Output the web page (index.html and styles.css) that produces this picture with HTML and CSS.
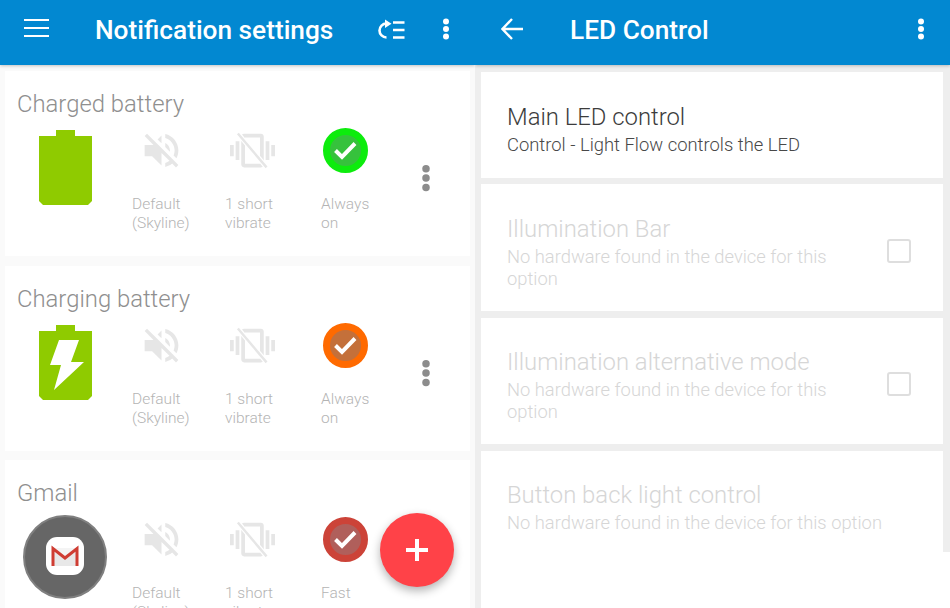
FILE: index.html
```html
<!DOCTYPE html>
<html lang="en">
<head>
<meta charset="utf-8">
<title>Light Flow settings</title>
<link rel="stylesheet" href="styles.css">
</head>
<body>
<svg class="defs" width="0" height="0" aria-hidden="true">
  <symbol id="more" viewBox="0 0 8 24">
    <circle cx="4" cy="4.5" r="3"/><circle cx="4" cy="12" r="3"/><circle cx="4" cy="19.5" r="3"/>
  </symbol>
  <symbol id="mute" viewBox="0 0 24 24">
    <path d="M16.5 12c0-1.77-1.02-3.29-2.5-4.03v2.21l2.45 2.45c.03-.2.05-.41.05-.63zm2.5 0c0 .94-.2 1.82-.54 2.64l1.51 1.51C20.63 14.91 21 13.5 21 12c0-4.28-2.99-7.86-7-8.77v2.06c2.89.86 5 3.54 5 6.71zM4.27 3L3 4.27 7.73 9H3v6h4l5 5v-6.73l4.25 4.25c-.67.52-1.42.93-2.25 1.18v2.06c1.38-.31 2.63-.95 3.69-1.81L19.73 21 21 19.73l-9-9L4.27 3zM12 4L9.91 6.09 12 8.18V4z"/>
  </symbol>
  <symbol id="novib" viewBox="0 0 24 24">
    <path d="M0 15h2V9H0v6zm3 2h2V7H3v10zm19-8v6h2V9h-2zm-3 8h2V7h-2v10zM16.5 3h-9C6.67 3 6 3.67 6 4.5v15c0 .83.67 1.5 1.5 1.5h9c.83 0 1.5-.67 1.5-1.5v-15c0-.83-.67-1.5-1.5-1.5zM16 19H8V5h8v14z"/>
    <path d="M4.5 3.2 19.5 21" stroke="#fff" stroke-width="2.6" fill="none"/>
    <path d="M4.2 2.9 19.5 21" stroke="#e6e6e6" stroke-width="1.3" fill="none"/>
  </symbol>
  <symbol id="tick" viewBox="0 0 46 46">
    <path d="M13.5 23.5 20 30 33 16.5" fill="none" stroke="#fff" stroke-width="4"/>
  </symbol>
  <symbol id="battery" viewBox="0 0 53 75">
    <path d="M17 0h19v6h17v65l-4 4H4l-4-4V6h17z"/>
  </symbol>
</svg>

<main class="screens">
  <section class="screen screen-list">
    <header class="appbar">
      <span class="appbar-lead">
        <svg class="ic-menu" viewBox="0 0 25 18"><path d="M0 1h25M0 9h25M0 17h25"/></svg>
      </span>
      <h1 class="appbar-title">Notification settings</h1>
      <svg class="ic-redo" viewBox="0 0 28 21">
        <path class="ln" d="M9.500 4.500A7 7 0 0 0 9.500 18.500"/>
        <path class="fl" d="M8 0.500l6.500 4.200L8 9z"/>
        <path class="ln" d="M16 3.500H27.500M16 11H27.500M16 18.500H27.500"/>
      </svg>
      <svg class="ic-more"><use href="#more"/></svg>
    </header>

    <div class="list">
      <article class="rule">
        <h2 class="rule-title">Charged battery</h2>
        <div class="rule-row">
          <div class="rule-lead"><svg class="ic-battery"><use href="#battery"/></svg></div>
          <div class="opt opt-sound"><svg class="ic-off"><use href="#mute"/></svg><p>Default (Skyline)</p></div>
          <div class="opt opt-vib"><svg class="ic-off"><use href="#novib"/></svg><p>1 short vibrate</p></div>
          <div class="opt opt-led"><span class="led led-green"><svg><use href="#tick"/></svg></span><p>Always on</p></div>
          <svg class="ic-rule-more"><use href="#more"/></svg>
        </div>
      </article>

      <article class="rule">
        <h2 class="rule-title">Charging battery</h2>
        <div class="rule-row">
          <div class="rule-lead">
            <svg class="ic-battery" viewBox="0 0 53 75">
              <use href="#battery"/>
              <path class="bolt" d="M20 15h20l-8 22h13L15 65l7-25H11z"/>
            </svg>
          </div>
          <div class="opt opt-sound"><svg class="ic-off"><use href="#mute"/></svg><p>Default (Skyline)</p></div>
          <div class="opt opt-vib"><svg class="ic-off"><use href="#novib"/></svg><p>1 short vibrate</p></div>
          <div class="opt opt-led"><span class="led led-orange"><svg><use href="#tick"/></svg></span><p>Always on</p></div>
          <svg class="ic-rule-more"><use href="#more"/></svg>
        </div>
      </article>

      <article class="rule">
        <h2 class="rule-title">Gmail</h2>
        <div class="rule-row">
          <div class="rule-lead">
            <svg class="ic-app" viewBox="0 0 84 84">
              <circle cx="42" cy="42" r="41" fill="#666" stroke="#808080" stroke-width="2"/>
              <rect x="23" y="22" width="38" height="38" rx="11" fill="#fff"/>
              <path d="M29 33h26v18H29z" fill="#e8e8e8"/>
              <path d="M29 33l13 10 13-10" fill="#f4f4f4"/>
              <path d="M30 51V33.500l12 9.500 12-9.500V51" fill="none" stroke="#cf3d33" stroke-width="3"/>
            </svg>
          </div>
          <div class="opt opt-sound"><svg class="ic-off"><use href="#mute"/></svg><p>Default (Skyline)</p></div>
          <div class="opt opt-vib"><svg class="ic-off"><use href="#novib"/></svg><p>1 short vibrate</p></div>
          <div class="opt opt-led"><span class="led led-red"><svg><use href="#tick"/></svg></span><p>Fast</p></div>
          <svg class="ic-rule-more"><use href="#more"/></svg>
        </div>
      </article>
    </div>

    <button class="fab" type="button" aria-label="Add">
      <svg viewBox="0 0 22 22"><path d="M11 0v22M0 11h22"/></svg>
    </button>
  </section>

  <section class="screen screen-led">
    <header class="appbar">
      <span class="appbar-lead">
        <svg class="ic-back" viewBox="0 0 22 22"><path d="M22 11H2M11 1 1.500 11 11 21"/></svg>
      </span>
      <h1 class="appbar-title">LED Control</h1>
      <svg class="ic-more"><use href="#more"/></svg>
    </header>

    <div class="prefs">
      <div class="pref pref-main">
        <div class="pref-text">
          <h2>Main LED control</h2>
          <p>Control - Light Flow controls the LED</p>
        </div>
      </div>
      <div class="pref pref-off pref-a">
        <div class="pref-text">
          <h2>Illumination Bar</h2>
          <p>No hardware found in the device for this option</p>
        </div>
        <span class="check"></span>
      </div>
      <div class="pref pref-off pref-b">
        <div class="pref-text">
          <h2>Illumination alternative mode</h2>
          <p>No hardware found in the device for this option</p>
        </div>
        <span class="check"></span>
      </div>
      <div class="pref pref-off pref-last">
        <div class="pref-text">
          <h2>Button back light control</h2>
          <p>No hardware found in the device for this option</p>
        </div>
      </div>
      <div class="prefs-end"></div>
    </div>
  </section>
</main>
</body>
</html>
```
FILE: styles.css
```css
* { box-sizing: border-box; }

html, body {
  margin: 0;
  height: 608px;
  overflow: hidden;
  background: #fafafa;
  font-family: Roboto, "Liberation Sans", sans-serif;
}

h1, h2, p { margin: 0; font-weight: 400; }

.defs { position: absolute; }

.screens {
  display: grid;
  grid-template-columns: 475px 475px;
  height: 608px;
}

.screen {
  position: relative;
  height: 608px;
  overflow: hidden;
  display: flex;
  flex-direction: column;
}

.screen-list { background: #fafafa; }
.screen-led { background: #eeeeee; }

/* App bar */
.appbar {
  flex: none;
  position: relative;
  z-index: 2;
  height: 65px;
  display: flex;
  align-items: center;
  background: #0288d1;
  box-shadow: 0 1px 3px rgba(0, 0, 0, .22);
  color: #fff;
}

.appbar-lead {
  flex: none;
  width: 95px;
  padding-left: 24px;
  display: flex;
}

.appbar-title {
  flex: 1;
  font-size: 26.250px;
  font-weight: 500;
  line-height: 61px;
  height: 65px;
  white-space: nowrap;
}

.ic-menu {
  width: 25px;
  height: 18px;
  margin-top: -10px;
  fill: none;
  stroke: #fff;
  stroke-width: 2;
}

.ic-back {
  width: 22px;
  height: 22px;
  margin: -7px 0 0 2px;
  fill: none;
  stroke: #fff;
  stroke-width: 2.400;
}

.ic-redo {
  flex: none;
  width: 28px;
  height: 21px;
  margin: -7px 37px 0 0;
}
.ic-redo .ln { fill: none; stroke: #fff; stroke-width: 2.600; }
.ic-redo .fl { fill: #fff; }

.ic-more {
  flex: none;
  width: 8px;
  height: 24px;
  margin: -7px 25px 0 0;
  fill: #fff;
}

/* Notification list */
.list {
  flex: 1;
  display: flex;
  flex-direction: column;
  gap: 9.500px;
  padding: 6px 5px 0;
}

.rule {
  flex: none;
  height: 185px;
  background: #fff;
  padding: 19px 0 0 13px;
}

.rule-title {
  margin-left: -1px;
  font-size: 23.850px;
  font-weight: 300;
  line-height: 28px;
  color: #8f8f8f;
  white-space: nowrap;
}

.rule-row {
  display: flex;
  align-items: flex-start;
  margin-top: 12px;
}

.rule-lead {
  flex: none;
  width: 114px;
  height: 75px;
}

.ic-battery {
  display: block;
  width: 53px;
  height: 75px;
  margin-left: 21px;
  fill: #8fcb00;
}
.bolt { fill: #fff; }

.ic-app {
  display: block;
  width: 84px;
  height: 84px;
  margin: -4px 0 0 5px;
}

.opt { flex: none; }
.opt p {
  font-size: 15.500px;
  font-weight: 300;
  line-height: 19px;
  color: #b4b4b4;
}

.opt-sound { width: 93px; }
.opt-sound p { width: 60px; }
.opt-vib { width: 96px; }
.opt-vib p { width: 60px; }
.opt-led { width: 93px; }
.opt-led p { width: 60px; }

.ic-off {
  display: block;
  width: 45px;
  height: 45px;
  margin-top: -2px;
  fill: #e6e6e6;
}
.ic-off + p { margin-top: 22px; }
.opt-sound .ic-off { margin-left: 7px; }
.opt-vib .ic-off { margin-left: 5px; }

.led {
  display: flex;
  width: 45px;
  height: 45px;
  margin: -2px 0 0 2px;
  border-radius: 50%;
  border: 7.500px solid;
}
.led + p { margin-top: 22px; }
.led svg {
  flex: none;
  width: 46px;
  height: 46px;
  margin: -8px;
}
.led-green { background: #36c23c; border-color: #0dec0d; }
.led-orange { background: #c4703a; border-color: #ff6a00; }
.led-red { background: #b05f5b; border-color: #cc4338; }

.ic-rule-more {
  flex: none;
  width: 10px;
  height: 30px;
  margin: 33px 0 0 7px;
  fill: #8c8c8c;
}

/* Floating action */
.fab {
  position: absolute;
  left: 380px;
  top: 513px;
  z-index: 3;
  width: 74px;
  height: 74px;
  padding: 0;
  border: 0;
  border-radius: 50%;
  background: #ff4248;
  box-shadow: 0 4px 10px rgba(0, 0, 0, .3);
  display: flex;
  align-items: center;
  justify-content: center;
}
.fab svg {
  width: 22px;
  height: 22px;
  fill: none;
  stroke: #fff;
  stroke-width: 4;
}

/* LED preferences */
.prefs {
  flex: 1;
  display: flex;
  flex-direction: column;
  padding: 7px 7px 0 6px;
}

.pref {
  flex: none;
  display: flex;
  align-items: center;
  background: #fff;
  padding: 8px 32px 0 26px;
  margin-bottom: 7px;
}

.pref-main { height: 106px; margin-bottom: 6px; }
.pref-a { height: 127px; }
.pref-b { height: 126px; }
.pref-last { height: 101px; margin-bottom: 0; align-items: flex-start; padding-top: 29px; }

.pref-text { flex: 1; min-width: 0; }

.pref h2 {
  font-size: 23.850px;
  font-weight: 300;
  line-height: 30px;
  margin-bottom: 2px;
  color: #3c3c3c;
}
.pref p {
  font-size: 18.400px;
  font-weight: 300;
  line-height: 22px;
  color: #484848;
  max-width: 340px;
}
.pref-main p { max-width: none; }
.pref-last p { max-width: none; }

.pref-off h2, .pref-off p { color: #d6d6d6; }
.pref-off p { font-size: 18.350px; }

.check {
  flex: none;
  width: 24px;
  height: 24px;
  margin-top: -2px;
  border: 2.500px solid #dedede;
  border-radius: 3px;
}

.prefs-end {
  flex: 1;
  background: #fff;
  margin-right: -7px;
}
```
